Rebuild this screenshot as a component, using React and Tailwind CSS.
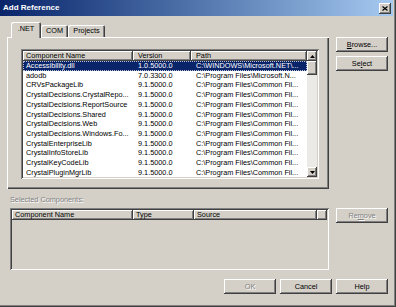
import React from "react";

const raised =
  "shadow-[inset_-1px_-1px_0_#404040,inset_1px_1px_0_#ffffff,inset_-2px_-2px_0_#808080]";
const sunken =
  "shadow-[inset_1px_1px_0_#808080,inset_-1px_-1px_0_#ffffff,inset_2px_2px_0_#404040,inset_-2px_-2px_0_#d4d0c8]";

const rows = [
  ["Accessibility.dll", "1.0.5000.0", "C:\\WINDOWS\\Microsoft.NET\\..."],
  ["adodb", "7.0.3300.0", "C:\\Program Files\\Microsoft.N..."],
  ["CRVsPackageLib", "9.1.5000.0", "C:\\Program Files\\Common Fil..."],
  ["CrystalDecisions.CrystalRepo...", "9.1.5000.0", "C:\\Program Files\\Common Fil..."],
  ["CrystalDecisions.ReportSource", "9.1.5000.0", "C:\\Program Files\\Common Fil..."],
  ["CrystalDecisions.Shared", "9.1.5000.0", "C:\\Program Files\\Common Fil..."],
  ["CrystalDecisions.Web", "9.1.5000.0", "C:\\Program Files\\Common Fil..."],
  ["CrystalDecisions.Windows.Fo...", "9.1.5000.0", "C:\\Program Files\\Common Fil..."],
  ["CrystalEnterpriseLib", "9.1.5000.0", "C:\\Program Files\\Common Fil..."],
  ["CrystalInfoStoreLib", "9.1.5000.0", "C:\\Program Files\\Common Fil..."],
  ["CrystalKeyCodeLib", "9.1.5000.0", "C:\\Program Files\\Common Fil..."],
  ["CrystalPluginMgrLib", "9.1.5000.0", "C:\\Program Files\\Common Fil..."],
];

function Button({ children, disabled }) {
  return (
    <div
      className={
        "w-[52px] h-[15px] shrink-0 flex items-center justify-center text-[7.3px] leading-none bg-[#d4d0c8] " +
        raised +
        (disabled ? " text-[#808080] [text-shadow:1px_1px_0_#ffffff]" : " text-black")
      }
    >
      {children}
    </div>
  );
}

function HeaderCell({ w, children, pl = "pl-[3px]" }) {
  return (
    <div
      className={
        "h-[10px] shrink-0 text-[7.3px] leading-[10px] text-black bg-[#d4d0c8] whitespace-nowrap overflow-hidden " +
        pl +
        " " +
        raised
      }
      style={{ width: w }}
    >
      {children}
    </div>
  );
}

function Tri({ down }) {
  return (
    <svg width="5" height="3" viewBox="0 0 5 3">
      {down ? (
        <polygon points="0,0 5,0 2.5,3" fill="#000" />
      ) : (
        <polygon points="0,3 5,3 2.5,0" fill="#000" />
      )}
    </svg>
  );
}

export default function App() {
  return (
    <div className="w-[396px] h-[307px] bg-[#d4d0c8] overflow-hidden flex flex-col font-['Liberation_Sans',Arial,sans-serif] shadow-[inset_-1px_-1px_0_#404040,inset_-2px_-2px_0_#808080]">
      {/* title bar */}
      <div className="h-[16px] mr-[3px] shrink-0 flex items-center justify-between bg-linear-to-r from-[#0a246a] to-[#a6caf0]">
        <span className="pl-[3px] text-[8px] font-bold text-white leading-none">Add Reference</span>
        <div
          className={
            "w-[12px] h-[11px] mr-[2px] bg-[#d4d0c8] flex items-center justify-center " + raised
          }
        >
          <svg width="6" height="5" viewBox="0 0 6 5">
            <path d="M0.5 0.5 L5.5 4.5 M5.5 0.5 L0.5 4.5" stroke="#000" strokeWidth="1.2" />
          </svg>
        </div>
      </div>

      {/* main area */}
      <div className="flex flex-row pt-[6px]">
        {/* left column */}
        <div className="ml-[7px] w-[322px] flex flex-col">
          {/* tab strip */}
          <div className="h-[15px] flex flex-row items-end relative z-10">
            <div className="ml-[4px] w-[30px] h-[16px] mb-[-1px] bg-[#d4d0c8] rounded-t-[2px] shadow-[inset_1px_1px_0_#ffffff,inset_-1px_0_0_#404040,inset_-2px_0_0_#808080] text-[7.3px] leading-none text-black flex items-center justify-center pb-[2px]">
              .NET
            </div>
            <div className="w-[27px] h-[12px] bg-[#d4d0c8] rounded-t-[2px] shadow-[inset_1px_1px_0_#ffffff,inset_-1px_0_0_#404040,inset_-2px_0_0_#808080] text-[7.3px] leading-none text-black flex items-center justify-center">
              COM
            </div>
            <div className="w-[37px] h-[12px] bg-[#d4d0c8] rounded-t-[2px] shadow-[inset_1px_1px_0_#ffffff,inset_-1px_0_0_#404040,inset_-2px_0_0_#808080] text-[7.3px] leading-none text-black flex items-center justify-center">
              Projects
            </div>
          </div>
          {/* tab panel */}
          <div
            className={
              "h-[152px] pl-[14px] pt-[12px] bg-[#d4d0c8] " +
              "shadow-[inset_1px_1px_0_#ffffff,inset_-1px_-1px_0_#404040,inset_-2px_-2px_0_#808080]"
            }
          >
            <div className={"w-[298px] h-[130px] p-[2px] bg-white flex flex-row " + sunken}>
              <div className="w-[284px] flex flex-col overflow-hidden">
                <div className="flex flex-row shrink-0">
                  <HeaderCell w={110}>Component Name</HeaderCell>
                  <HeaderCell w={58} pl="pl-[5px]">Version</HeaderCell>
                  <HeaderCell w={116} pl="pl-[5px]">Path</HeaderCell>
                </div>
                <div className="flex flex-col overflow-hidden">
                  {rows.map((r, i) => (
                    <div
                      key={i}
                      className={
                        "h-[9.73px] shrink-0 flex flex-row text-[7.3px] leading-[9.73px] whitespace-nowrap " +
                        (i === 0
                          ? "bg-[#0a246a] text-white outline-1 outline-dotted outline-[#b8c0d8] -outline-offset-1"
                          : "text-black")
                      }
                    >
                      <div className="w-[110px] pl-[3px] overflow-hidden">{r[0]}</div>
                      <div className="w-[58px] pl-[5px] overflow-hidden">{r[1]}</div>
                      <div className="w-[116px] pl-[5px] overflow-hidden">{r[2]}</div>
                    </div>
                  ))}
                </div>
              </div>
              {/* scrollbar */}
              <div className="w-[10px] flex flex-col bg-[#eceae6]">
                <div className={"h-[10px] shrink-0 bg-[#d4d0c8] flex items-center justify-center " + raised}>
                  <Tri />
                </div>
                <div className={"h-[14px] shrink-0 bg-[#d4d0c8] " + raised}></div>
                <div className="flex-1"></div>
                <div className={"h-[10px] shrink-0 bg-[#d4d0c8] flex items-center justify-center " + raised}>
                  <Tri down />
                </div>
              </div>
            </div>
          </div>
          {/* selected components label */}
          <div className="mt-[6px] ml-[3px] h-[10px] text-[7.3px] leading-[10px] text-[#808080] [text-shadow:1px_1px_0_#ffffff]">
            Selected Components:
          </div>
          {/* lower list */}
          <div className={"mt-[3px] ml-[3px] w-[319px] h-[62px] p-[2px] bg-[#d4d0c8] " + sunken}>
            <div className="flex flex-row">
              <HeaderCell w={121}>Component Name</HeaderCell>
              <HeaderCell w={61}>Type</HeaderCell>
              <HeaderCell w={123}>Source</HeaderCell>
              <HeaderCell w={10}></HeaderCell>
            </div>
          </div>
        </div>

        {/* right column */}
        <div className="ml-[7px] w-[52px] flex flex-col">
          <div className="mt-[15px]">
            <Button>
              <span><span className="underline">B</span>rowse...</span>
            </Button>
          </div>
          <div className="mt-[4px]">
            <Button>
              <span>Se<span className="underline">l</span>ect</span>
            </Button>
          </div>
          <div className="mt-[137px]">
            <Button disabled>
              <span>Re<span className="underline">m</span>ove</span>
            </Button>
          </div>
        </div>
      </div>

      {/* bottom buttons */}
      <div className="mt-[9px] flex flex-row justify-end gap-[4px] pr-[8px]">
        <Button disabled>OK</Button>
        <Button>Cancel</Button>
        <Button>Help</Button>
      </div>
    </div>
  );
}
